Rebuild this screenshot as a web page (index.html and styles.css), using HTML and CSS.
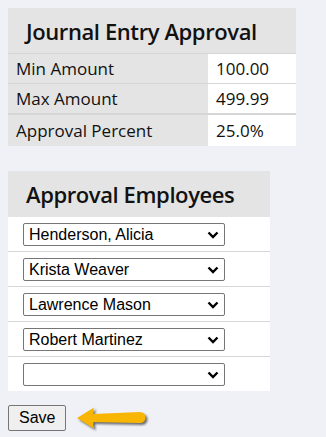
FILE: index.html
```html
<!DOCTYPE html>
<html>
<head>
<meta charset="utf-8">
<link rel="stylesheet" href="styles.css">
</head>
<body>
<table class="settings">
  <tr><th colspan="2" class="head">Journal Entry Approval</th></tr>
  <tr class="row"><td class="label">Min Amount</td><td class="value">100.00</td></tr>
  <tr class="row"><td class="label">Max Amount</td><td class="value">499.99</td></tr>
  <tr class="row last"><td class="label">Approval Percent</td><td class="value">25.0%</td></tr>
</table>

<table class="employees">
  <tr><th class="head">Approval Employees</th></tr>
  <tr class="erow"><td class="ecell"><span class="pickwrap"><select class="pick"><option>Henderson, Alicia</option></select><svg class="chev" width="12" height="8" viewBox="0 0 12 8"><path d="M1.5 1.5 L6 6 L10.5 1.5" fill="none" stroke="#000" stroke-width="2.4"/></svg></span></td></tr>
  <tr class="erow"><td class="ecell"><span class="pickwrap"><select class="pick"><option>Krista Weaver</option></select><svg class="chev" width="12" height="8" viewBox="0 0 12 8"><path d="M1.5 1.5 L6 6 L10.5 1.5" fill="none" stroke="#000" stroke-width="2.4"/></svg></span></td></tr>
  <tr class="erow"><td class="ecell"><span class="pickwrap"><select class="pick"><option>Lawrence Mason</option></select><svg class="chev" width="12" height="8" viewBox="0 0 12 8"><path d="M1.5 1.5 L6 6 L10.5 1.5" fill="none" stroke="#000" stroke-width="2.4"/></svg></span></td></tr>
  <tr class="erow"><td class="ecell"><span class="pickwrap"><select class="pick"><option>Robert Martinez</option></select><svg class="chev" width="12" height="8" viewBox="0 0 12 8"><path d="M1.5 1.5 L6 6 L10.5 1.5" fill="none" stroke="#000" stroke-width="2.4"/></svg></span></td></tr>
  <tr class="erow"><td class="ecell"><span class="pickwrap"><select class="pick"><option></option></select><svg class="chev" width="12" height="8" viewBox="0 0 12 8"><path d="M1.5 1.5 L6 6 L10.5 1.5" fill="none" stroke="#000" stroke-width="2.4"/></svg></span></td></tr>
</table>

<div class="actions">
  <button class="save">Save</button>
  <svg class="arrow" width="76" height="28" viewBox="0 0 76 28">
    <path d="M3 14 L20 3.5 Q18.5 7.5 19.5 10 L66 8 A5.5 5.5 0 0 1 66 19 L19.5 18 Q18.5 21 20 24.5 Z" fill="#f8b602"/>
  </svg>
</div>
</body>
</html>
```

FILE: styles.css
```css
html, body {
  margin: 0;
  padding: 0;
}
body {
  background: #f0f1f6;
  padding: 8px;
  font-family: "Open Sans", "DejaVu Sans", sans-serif;
  color: #111;
}
table {
  border-collapse: collapse;
  border-spacing: 0;
}
.head {
  background: #e4e4e4;
  text-align: left;
  font-weight: 600;
  font-size: 22px;
  letter-spacing: -0.4px;
  padding: 0 0 0 18px;
  height: 45px;
  color: #111;
}
.settings {
  width: 288px;
}
.settings .row td {
  border-top: 1px solid #d6d6d6;
  height: 29px;
  padding: 0 8px;
  font-size: 17px;
}
.settings .row.last td {
  border-top: 2px solid #d6d6d6;
  height: 31px;
}
.label {
  background: #e4e4e4;
  width: 184px;
}
.value {
  background: #ffffff;
}
.employees {
  width: 262px;
  margin-top: 25px;
}
.employees .head {
  height: 46px;
}
.ecell {
  background: #ffffff;
  height: 34px;
  padding: 0 0 0 15px;
}
.erow + .erow .ecell {
  border-top: 1px solid #d6d6d6;
}
.pickwrap {
  position: relative;
  display: block;
  width: 202px;
}
.pick {
  appearance: none;
  -webkit-appearance: none;
  width: 202px;
  height: 23px;
  padding: 0 24px 0 5px;
  font-family: "Liberation Sans", Arial, sans-serif;
  font-size: 16px;
  color: #000;
  background: #fff;
  border: 1px solid #767676;
  border-radius: 2px;
  display: block;
}
.chev {
  position: absolute;
  right: 6px;
  top: 8px;
  pointer-events: none;
}
.actions {
  display: flex;
  align-items: center;
  gap: 8px;
  margin-top: 13px;
}
.save {
  font-family: "Liberation Sans", Arial, sans-serif;
  font-size: 16px;
  padding: 3px 10px;
  height: 26px;
  background: #efefef;
  border: 1px solid #767676;
  border-radius: 2px;
  color: #000;
}
.arrow {
  display: block;
  filter: drop-shadow(2px 2px 1px rgba(0, 0, 0, 0.55));
}
```
